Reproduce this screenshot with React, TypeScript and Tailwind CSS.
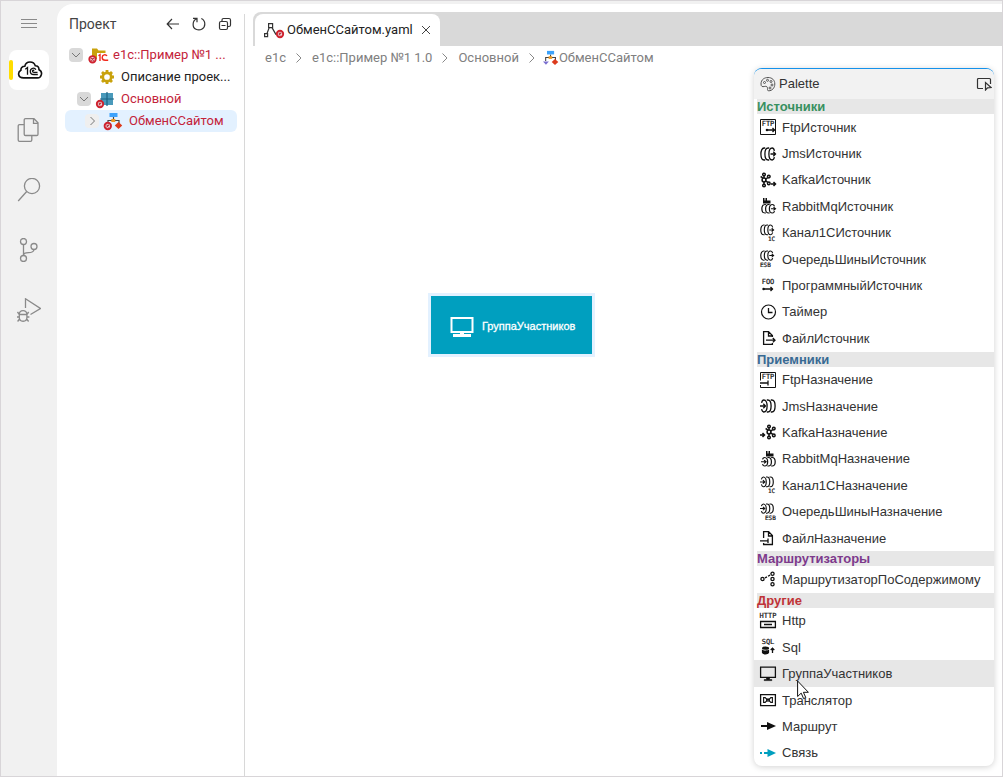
import React from 'react';

interface IconProps {
  className?: string;
}

interface PaletteItem {
  label: string;
  icon: React.ReactNode;
  active?: boolean;
}

interface PaletteSection {
  title: string;
  color: string;
  items: PaletteItem[];
}

/* ---------- shared drawing helpers ---------- */

const Icon16 = ({ children }: { children: React.ReactNode }) => (
  <svg
    viewBox="0 0 16 16"
    className="w-4 h-4 shrink-0 overflow-visible"
    fill="none"
    stroke="#111"
    strokeWidth="1.3"
    aria-hidden="true"
  >
    {children}
  </svg>
);

const Tiny = ({ x, y, size = 7, children }: { x: number; y: number; size?: number; children: string }) => (
  <text
    x={x}
    y={y}
    fontSize={size}
    fontFamily="DejaVu Sans Mono, monospace"
    fill="#111"
    stroke="#111"
    strokeWidth=".2"
  >
    {children}
  </text>
);

const ErrorBadge = ({ cx, cy }: { cx: number; cy: number }) => (
  <g fill="none">
    <circle cx={cx} cy={cy} r="3.2" fill="#f4d8dc" stroke="#cf222e" strokeWidth="1.9" />
    <path d={`M${cx - 1.3} ${cy - 1.3}l2.6 2.6m0-2.6l-2.6 2.6`} stroke="#b0303c" strokeWidth="1.1" />
  </g>
);

// Queue barrel with the arrow coming out of it
const BarrelOut = () => (
  <g>
    <path d="M5.2 2H4.2C-.2 2-.2 14 4.2 14h1M9.2 2h-1C3.8 2 3.8 14 8.2 14h1" />
    <path d="M14.4 4.8C13.9 2.8 13.2 2 12.2 2 7.8 2 7.8 14 12.2 14c1 0 1.7-.8 2.2-2.8" />
    <path d="M10.5 8h5M13.3 5.8L15.5 8l-2.2 2.2" />
  </g>
);

// Queue barrel with the arrow going into it
const BarrelIn = () => (
  <g>
    <path d="M10.8 2h1c4.4 0 4.4 12 0 12h-1M6.8 2h1c4.4 0 4.4 12 0 12h-1" />
    <path d="M1.6 4.8C2.1 2.8 2.8 2 3.8 2c4.4 0 4.4 12 0 12-1 0-1.7-.8-2.2-2.8" />
    <path d="M0 8h5.5M3.3 5.8L5.5 8l-2.2 2.2" />
  </g>
);

const Rabbit = ({ x }: { x: number }) => (
  <path d={`M${x} 0h1.5v2.500h1V0H${x + 4}v2.500h3.500V5.500H${x}z`} fill="#111" stroke="none" />
);

const KafkaNodes = () => (
  <g strokeWidth="1.5">
    <circle cx="4" cy="8" r="1.9" />
    <circle cx="4" cy="2.5" r="1.3" />
    <circle cx="4" cy="13.5" r="1.3" />
    <circle cx="8.8" cy="4.6" r="1.3" />
    <circle cx="8.8" cy="11.4" r="1.3" />
    <path d="M.6 4.500L2.800 5.800M4 3.600V6M4 10v2.400M5.600 7l2-1.200M5.600 9l2 1.200" />
  </g>
);

/* ---------- palette icons ---------- */

const FtpSource = () => (
  <Icon16>
    <path d="M.5.5h15v15H.5z" strokeWidth="1" />
    <Tiny x={1.7} y={7}>FTP</Tiny>
    <path d="M6 11h9M12.5 9l2 2-2 2" />
    <circle cx="7" cy="11" r="1.3" fill="#111" stroke="none" />
  </Icon16>
);

const FtpTarget = () => (
  <Icon16>
    <path d="M.5 8.5V.5h15v15H.5V13" strokeWidth="1" />
    <Tiny x={1.7} y={7}>FTP</Tiny>
    <path d="M0 11h7.5M8 8.5v5" />
  </Icon16>
);

const Jms = ({ out }: { out?: boolean }) => <Icon16>{out ? <BarrelOut /> : <BarrelIn />}</Icon16>;

const KafkaSource = () => (
  <Icon16>
    <KafkaNodes />
    <path d="M11 12h4.5M13.5 10l2 2-2 2" strokeWidth="1.5" />
  </Icon16>
);

const KafkaTarget = () => (
  <Icon16>
    <g transform="translate(5 0)">
      <KafkaNodes />
    </g>
    <path d="M0 11h4.5M2.5 9l2 2-2 2" strokeWidth="1.5" />
  </Icon16>
);

const RabbitSource = () => (
  <Icon16>
    <Rabbit x={3} />
    <g transform="translate(1 5) scale(.94 .72)">
      <BarrelOut />
    </g>
  </Icon16>
);

const RabbitTarget = () => (
  <Icon16>
    <Rabbit x={6} />
    <g transform="translate(1 5) scale(.94 .72)">
      <BarrelIn />
    </g>
  </Icon16>
);

const ChannelIcon = ({ out }: { out?: boolean }) => (
  <Icon16>
    <g transform="translate(0 -1.5) scale(.88 .8)">{out ? <BarrelOut /> : <BarrelIn />}</g>
    <Tiny x={8} y={16} size={6}>1С</Tiny>
  </Icon16>
);

const EsbIcon = ({ out }: { out?: boolean }) => (
  <Icon16>
    <g transform="translate(0 -1.5) scale(.88 .76)">{out ? <BarrelOut /> : <BarrelIn />}</g>
    <Tiny x={out ? 0 : 5} y={16} size={6}>ESB</Tiny>
  </Icon16>
);

const CodeSource = () => (
  <Icon16>
    <Tiny x={1.7} y={5.5}>FOO</Tiny>
    <path d="M3 11h10M10.5 9l2 2-2 2" />
    <circle cx="3.6" cy="11" r="1.3" fill="#111" stroke="none" />
  </Icon16>
);

const TimerIcon = () => (
  <Icon16>
    <circle cx="8.5" cy="8" r="7" strokeWidth="1.2" />
    <path d="M8.5 4v4.5h4" />
  </Icon16>
);

const FileSource = () => (
  <Icon16>
    <path d="M12.4 7V5.5L8.5 1.6H3.6v12.8h8.8V13M8.5 2v4h4" />
    <path d="M6 10.2h9M12.8 8l2.2 2.2-2.2 2.2" />
  </Icon16>
);

const FileTarget = () => (
  <Icon16>
    <path d="M3.6 8V1.6h5l3.8 3.9v9H3.6V13M8.5 2v4h4" />
    <path d="M0 10.8h7.5M8 8.5V13" />
  </Icon16>
);

const RouterIcon = () => (
  <Icon16>
    <circle cx="2.5" cy="8" r="1.6" />
    <circle cx="12.5" cy="2.8" r="1.6" />
    <circle cx="12.5" cy="8" r="1.6" />
    <circle cx="12.5" cy="13.2" r="1.6" />
    <path d="M5 6.8l2-1M8 5.2l2-1.1" />
  </Icon16>
);

const HttpIcon = () => (
  <Icon16>
    <Tiny x={-0.5} y={4.5}>HTTP</Tiny>
    <path d="M.6 8.5h14.8v6H.6zM4 11.5h8" />
  </Icon16>
);

const SqlIcon = () => (
  <Icon16>
    <Tiny x={1.7} y={5}>SQL</Tiny>
    <ellipse cx="5.5" cy="9.2" rx="3.6" ry="1.6" fill="#111" stroke="none" />
    <path d="M1.9 10.6c1.6 1.2 5.6 1.2 7.2 0v3.2c-1.2 2.2-6 2.2-7.2 0z" fill="#111" stroke="none" />
    <path d="M12.5 14V9.4M10.7 11l1.8-1.8 1.8 1.8" />
  </Icon16>
);

const MonitorIcon = () => (
  <Icon16>
    <path d="M.6 1.1h14.8v10.3H.6z" />
    <path d="M6.5 12h3v1.6h2.3v1H4.2v-1h2.3z" fill="#111" strokeWidth=".6" />
  </Icon16>
);

const TranslatorIcon = () => (
  <Icon16>
    <path d="M.6 2.6h14.8v11H.6z" />
    <path
      d="M3.6 5.6h1.6l1.4 1.6v1.6l-1.4 1.6H3.6zM12.4 5.6h-1.6L9.4 7.2v1.6l1.4 1.6h1.6zM6.8 6.2l2.4 3.6M9.2 6.2L6.8 9.8"
      strokeWidth="1.1"
    />
  </Icon16>
);

const RouteIcon = () => (
  <Icon16>
    <path d="M1 8h8" strokeWidth="2" />
    <path d="M7 4l9 4-9 4z" fill="#111" stroke="none" />
  </Icon16>
);

const LinkIcon = () => (
  <Icon16>
    <path d="M0 8h2M4 8h5" stroke="#009fbf" strokeWidth="2" />
    <path d="M7.5 4l8.5 4-8.5 4z" fill="#009fbf" stroke="none" />
  </Icon16>
);

const sections: PaletteSection[] = [
  {
    title: 'Источники',
    color: 'text-[#38905f]',
    items: [
      { label: 'FtpИсточник', icon: <FtpSource /> },
      { label: 'JmsИсточник', icon: <Jms out /> },
      { label: 'KafkaИсточник', icon: <KafkaSource /> },
      { label: 'RabbitMqИсточник', icon: <RabbitSource /> },
      { label: 'Канал1СИсточник', icon: <ChannelIcon out /> },
      { label: 'ОчередьШиныИсточник', icon: <EsbIcon out /> },
      { label: 'ПрограммныйИсточник', icon: <CodeSource /> },
      { label: 'Таймер', icon: <TimerIcon /> },
      { label: 'ФайлИсточник', icon: <FileSource /> },
    ],
  },
  {
    title: 'Приемники',
    color: 'text-[#386a94]',
    items: [
      { label: 'FtpНазначение', icon: <FtpTarget /> },
      { label: 'JmsНазначение', icon: <Jms /> },
      { label: 'KafkaНазначение', icon: <KafkaTarget /> },
      { label: 'RabbitMqНазначение', icon: <RabbitTarget /> },
      { label: 'Канал1СНазначение', icon: <ChannelIcon /> },
      { label: 'ОчередьШиныНазначение', icon: <EsbIcon /> },
      { label: 'ФайлНазначение', icon: <FileTarget /> },
    ],
  },
  {
    title: 'Маршрутизаторы',
    color: 'text-[#7d3a8c]',
    items: [{ label: 'МаршрутизаторПоСодержимому', icon: <RouterIcon /> }],
  },
  {
    title: 'Другие',
    color: 'text-[#c03338]',
    items: [
      { label: 'Http', icon: <HttpIcon /> },
      { label: 'Sql', icon: <SqlIcon /> },
      { label: 'ГруппаУчастников', icon: <MonitorIcon />, active: true },
      { label: 'Транслятор', icon: <TranslatorIcon /> },
      { label: 'Маршрут', icon: <RouteIcon /> },
      { label: 'Связь', icon: <LinkIcon /> },
    ],
  },
];

/* ---------- activity bar ---------- */

const ActivityIcon = ({ children }: { children: React.ReactNode }) => (
  <svg viewBox="0 0 24 24" className="w-6 h-6" fill="none" stroke="#8a8a8a" strokeWidth="1.3" aria-hidden="true">
    {children}
  </svg>
);

const activities = [
  {
    label: 'Файлы',
    icon: (
      <ActivityIcon>
        <path d="M8.5.7H17l4 4v11.5a1.3 1.3 0 0 1-1.3 1.3H8.5a1.3 1.3 0 0 1-1.3-1.3V2A1.3 1.3 0 0 1 8.5.7zM16.5.9v4.5H21" />
        <path d="M7 6.7H2.5A1.3 1.3 0 0 0 1.2 8v14a1.3 1.3 0 0 0 1.3 1.3h11a1.3 1.3 0 0 0 1.3-1.3v-4.2" />
      </ActivityIcon>
    ),
  },
  {
    label: 'Поиск',
    icon: (
      <ActivityIcon>
        <circle cx="15" cy="8" r="7.6" />
        <path d="M9.7 13.5L1.2 23" />
      </ActivityIcon>
    ),
  },
  {
    label: 'Система контроля версий',
    icon: (
      <ActivityIcon>
        <circle cx="6.5" cy="3.5" r="3" />
        <circle cx="6.5" cy="20.5" r="3" />
        <circle cx="17" cy="8.5" r="3" />
        <path d="M6.5 6.5v11M17 11.5c-.5 3-2.5 3.2-5.5 3.2-3 0-5 .3-5 2.8" />
      </ActivityIcon>
    ),
  },
  {
    label: 'Отладка',
    icon: (
      <ActivityIcon>
        <path d="M8.5 10V.8L23.4 10.5 13.5 16.5" />
        <path d="M2.3 16.5c0-5.3 7.6-5.3 7.6 0v3c0 5-7.6 5-7.6 0zM2.3 16.5h7.6M2.3 16.5L.5 14M9.9 16.5l1.8-2.5M0 19h2.3M9.9 19h2.5M2.5 21L.6 23.5M9.7 21l1.9 2.5" />
      </ActivityIcon>
    ),
  },
];

const ActivityBar = () => (
  <nav className="w-14 shrink-0 flex flex-col items-center pt-1.5">
    <button aria-label="Меню" className="w-10 h-7 flex items-center justify-center">
      <svg viewBox="0 0 16 10" className="w-4 h-2.5" stroke="#8a8a8a" aria-hidden="true">
        <path d="M0 .5h16M0 4.5h16M0 8.5h16" />
      </svg>
    </button>
    <button aria-label="Проект" className="mt-3 w-10 h-10 rounded-lg bg-white flex items-center overflow-hidden">
      <span className="w-1 h-5 rounded-sm bg-[#ffdd00]" />
      <svg viewBox="0 0 26 20" className="w-[26px] h-5 ml-1" fill="none" stroke="#111" strokeWidth="1.6" aria-hidden="true">
        <path d="M6.5 17.9H20a4.3 4.3 0 0 0 2-8.2C22 7.2 20.3 5.7 18.3 5.7 17.5 3.2 15.5 2 13 2 10.3 2 8.3 3.8 7.8 6.3 5 6.3 3.8 8.2 3.9 10.2.5 12 .6 17.9 6.5 17.9z" />
        <path
          d="M8.3 9.3l2.2-1.8v7.3M18.8 9.7c-1-2.3-5.5-2-5.5 1.5 0 2.3 1.5 3.3 3.5 3.3h4M17.3 10.5c-1-.6-1.8 0-1.8.8s.6 1 1.5 1h3.5"
          strokeWidth="1.3"
        />
      </svg>
    </button>
    <div className="mt-5 flex flex-col gap-5">
      {activities.map((item) => (
        <button key={item.label} aria-label={item.label} className="w-10 h-10 flex items-center justify-center">
          {item.icon}
        </button>
      ))}
    </div>
  </nav>
);

/* ---------- project tree ---------- */

const FlowIcon = ({ error, className = 'w-[18px]' }: { error?: boolean; className?: string }) => (
  <svg viewBox="0 0 18 18" className={`h-[18px] shrink-0 overflow-visible ${className}`} aria-hidden="true">
    <path d="M3 12.5v-4h11v4M8.5 5v3" fill="none" stroke="#444" strokeWidth="1.2" />
    <path d="M4.500 1h8v4h-8z" fill="#3ca2fb" />
    <path d="M6.300 7h4v3h-4z" fill="#f0981e" />
    <path d="M13.500 10l3.700 3.500-3.700 3.500-3.700-3.500z" fill="#dc3a1c" />
    <path d="M0 12.800h6.600L3.300 16.500z" fill="#7a6fd0" />
    {error && <ErrorBadge cx={2.8} cy={14} />}
  </svg>
);

const FolderIcon = () => (
  <svg viewBox="0 0 18 18" className="w-[18px] h-[18px] shrink-0 overflow-visible" aria-hidden="true">
    <path d="M3 2.5h5l1.5 2h7V7H8v6H3z" fill="#c9a20c" />
    <path
      d="M9.5 9.8l1.5-1.1V15M18 10c-1.2-1.9-4.8-1.5-4.8 1.5 0 2 1.3 2.8 3 2.8h3"
      fill="none"
      stroke="#f02a1e"
      strokeWidth="1.4"
    />
    <ErrorBadge cx={3.5} cy={13.3} />
  </svg>
);

const GearIcon = () => (
  <svg viewBox="0 0 18 18" className="w-[18px] h-[18px] shrink-0" fill="none" stroke="#c9a20c" aria-hidden="true">
    <circle cx="10" cy="9" r="4.2" strokeWidth="2.7" />
    <path
      d="M10 2v3M10 13v3M3 9h3M14 9h3M5 4l2.2 2.2M12.8 11.8L15 14M15 4l-2.2 2.2M7.2 11.8L5 14"
      strokeWidth="2.8"
    />
  </svg>
);

const PackageIcon = () => (
  <svg viewBox="0 0 18 18" className="w-[18px] h-[18px] shrink-0 overflow-visible" aria-hidden="true">
    <path d="M4 3h12v12H4z" fill="#4a9abb" />
    <path d="M10 2v14M3 9h14" stroke="#1d6485" strokeWidth="1.2" />
    <ErrorBadge cx={3} cy={14} />
  </svg>
);

interface TreeRow {
  label: string;
  icon: React.ReactNode;
  indent: string;
  chevron?: 'open' | 'closed';
  error?: boolean;
  selected?: boolean;
}

const treeRows: TreeRow[] = [
  { label: 'e1c::Пример №1 ...', icon: <FolderIcon />, indent: 'pl-1', chevron: 'open', error: true },
  { label: 'Описание проек...', icon: <GearIcon />, indent: 'pl-3' },
  { label: 'Основной', icon: <PackageIcon />, indent: 'pl-3', chevron: 'open', error: true },
  { label: 'ОбменССайтом', icon: <FlowIcon error />, indent: 'pl-5', chevron: 'closed', error: true, selected: true },
];

const ProjectPanel = () => (
  <aside className="w-[188px] shrink-0 pt-2.5">
    <div className="h-full border-r border-[#d8d8d8] pr-[7px]">
      <div className="flex items-center h-5 pl-3 pr-1">
        <h2 className="flex-1 text-[14px] text-[#444]">Проект</h2>
        <div className="flex gap-2.5 text-[#333]">
          <button aria-label="Назад">
            <svg viewBox="0 0 16 16" className="w-4 h-4" fill="none" stroke="currentColor" strokeWidth="1.2" aria-hidden="true">
              <path d="M14 8H2.5M7 3L2.2 8 7 13" />
            </svg>
          </button>
          <button aria-label="Обновить">
            <svg viewBox="0 0 16 16" className="w-4 h-4" fill="none" stroke="currentColor" strokeWidth="1.2" aria-hidden="true">
              <path d="M2 2.3h4v4M6 2.500C1 4.500 1 11.500 5 13.300c4.500 2 8.800-1 8.800-5.300 0-2.500-1.300-4.500-3.500-5.500" />
            </svg>
          </button>
          <button aria-label="Свернуть все">
            <svg viewBox="0 0 16 16" className="w-4 h-4" fill="none" stroke="currentColor" strokeWidth="1.2" aria-hidden="true">
              <rect x="2.500" y="5.500" width="8" height="8" rx="1.500" />
              <path d="M4.500 9.500h4M5 5.500V4a1.500 1.500 0 0 1 1.500-1.500H12A1.500 1.500 0 0 1 13.500 4v5A1.500 1.500 0 0 1 12 10.500h-1.500" />
            </svg>
          </button>
        </div>
      </div>
      <ul className="mt-2.5 pl-2">
        {treeRows.map((row) => (
          <li key={row.label}>
            <button
              className={`w-full h-[22px] rounded-md flex items-center text-left text-[13px] ${row.indent} ${
                row.selected ? 'bg-[#e3f1ff]' : ''
              } ${row.error ? 'text-[#c4233a]' : 'text-[#222]'}`}
            >
              <span
                className={`w-3.5 h-3.5 shrink-0 rounded-sm flex items-center justify-center ${
                  row.chevron === 'open' ? 'bg-[#d9d9d9]' : row.chevron === 'closed' ? 'bg-[#efefef]' : ''
                }`}
              >
                {row.chevron && (
                  <svg viewBox="0 0 10 10" className="w-2.5 h-2.5" fill="none" stroke="#777" aria-hidden="true">
                    <path d={row.chevron === 'open' ? 'M1 3l4 4 4-4' : 'M3.5 1l4 4-4 4'} />
                  </svg>
                )}
              </span>
              <span className="mx-1.5">{row.icon}</span>
              <span className="whitespace-nowrap">{row.label}</span>
            </button>
          </li>
        ))}
      </ul>
    </div>
  </aside>
);

/* ---------- editor ---------- */

const EditorTabs = () => (
  <div className="h-[34px] ml-2 flex shrink-0 rounded-tl-lg bg-[#d9d9d9]">
    <div className="ml-0.5 mt-0.5 w-[185px] flex items-center pl-[9px] pr-2 rounded-t-lg bg-white">
      <svg viewBox="0 0 20 18" className="w-5 h-[18px] shrink-0 overflow-visible" fill="none" stroke="#333" strokeWidth="1.2" aria-hidden="true">
        <path d="M4.600 2.600h4v4h-4zM.6 12.600h3v3h-3zM5.200 6.600L3 12.500M8 6.600l4 7" />
        <ErrorBadge cx={16} cy={13} />
      </svg>
      <span className="ml-[3px] flex-1 text-[13px] text-[#222]">ОбменССайтом.yaml</span>
      <button aria-label="Закрыть">
        <svg viewBox="0 0 12 12" className="w-3 h-3" stroke="#444" aria-hidden="true">
          <path d="M2 2l8 8M10 2l-8 8" />
        </svg>
      </button>
    </div>
  </div>
);

const Crumb = () => (
  <svg viewBox="0 0 8 10" className="w-2 h-2.5" fill="none" stroke="#888" aria-hidden="true">
    <path d="M1.5.5L6 5 1.5 9.5" />
  </svg>
);

const Breadcrumbs = () => (
  <div className="h-[22px] shrink-0 pl-5 pt-px flex items-center gap-[9px] text-[13px] text-[#808080]">
    <a href="#e1c">e1c</a>
    <Crumb />
    <a href="#project">e1c::Пример №1 1.0</a>
    <Crumb />
    <a href="#main">Основной</a>
    <Crumb />
    <a href="#flow" className="flex items-center -ml-0.5">
      <FlowIcon className="w-4" />
      ОбменССайтом
    </a>
  </div>
);

const Palette = () => (
  <section className="w-60 flex flex-col bg-white border-t border-[#1491ea] rounded-lg shadow-[0_1px_6px_rgba(0,0,0,0.18)] overflow-hidden font-['Liberation_Sans',Arial,sans-serif] text-[#333]">
    <header className="h-[30px] shrink-0 flex items-center gap-[3px] px-1.5 bg-[#f2f2f2] text-[13px]">
      <svg viewBox="0 0 16 16" className="w-4 h-4" fill="none" stroke="#555" aria-hidden="true">
        <path d="M1 8C1 3.500 4.500 1.500 8 1.500c4 0 6.800 2.500 6.800 6.500s-2.800 6.800-6 6.800c-2 0-1-2-1.300-3C7 10 5.500 10.200 4.200 10.500 2.500 11 1 10.500 1 8z" />
        <circle cx="4.5" cy="6.5" r="1" />
        <circle cx="7.5" cy="4.3" r="1" />
        <circle cx="11" cy="5.5" r="1" />
        <circle cx="12" cy="9" r="1" />
        <circle cx="10" cy="12" r="1" />
      </svg>
      <h2 className="flex-1">Palette</h2>
      <button aria-label="Выделение" className="-mr-1">
        <svg viewBox="0 0 16 14" className="w-4 h-3.5" fill="none" stroke="#333" strokeWidth="1.2" aria-hidden="true">
          <path d="M7 11.500H2.500A1 1 0 0 1 1.500 10.500V2.500a1 1 0 0 1 1-1H13.500a1 1 0 0 1 1 1V7" />
          <path d="M9.500 5.500v7.500l2-2.200 3.500-.3z" />
        </svg>
      </button>
    </header>
    {sections.map((section) => (
      <React.Fragment key={section.title}>
        <h3 className={`h-[15px] shrink-0 ml-[3px] bg-[#e7e7e7] text-[13px] leading-[15px] font-bold ${section.color}`}>
          {section.title}
        </h3>
        {section.items.map((item) => (
          <button
            key={item.label}
            className={`flex-1 flex items-center gap-1.5 pl-1.5 text-left text-[13px] leading-[15px] ${item.active ? 'bg-[#e7e7e7]' : ''}`}
          >
            {item.icon}
            {item.label}
          </button>
        ))}
      </React.Fragment>
    ))}
  </section>
);

const Cursor = ({ className = '' }: IconProps) => (
  <svg viewBox="0 0 12 20" className={`w-3 h-5 ${className}`} fill="#fff" stroke="#111" aria-hidden="true">
    <path d="M.6 1v15.500l3.600-3.400 2.400 5.500 2.200-1-2.400-5.300h5z" />
  </svg>
);

const Canvas = () => (
  <div className="relative flex-1 min-h-0 flex justify-end pr-2 pb-2.5">
    {/* participant group node placed on the diagram */}
    <div className="absolute left-[183px] top-[225px] w-[167px] h-16 flex items-center gap-2 pl-[19px] pt-[3px] bg-[#009fbf] border-[3px] border-[#e3f1ff] text-white">
      <svg viewBox="0 0 24 22" className="w-6 h-[22px]" fill="none" stroke="#fff" strokeWidth="2" aria-hidden="true">
        <path d="M1.5 2h21v14h-21z" />
        <path d="M10 16h4v2h7v3H3v-3h7z" fill="#fff" stroke="none" />
      </svg>
      <span className="font-['Liberation_Sans',Arial,sans-serif] text-[11px] [-webkit-text-stroke:0.3px_white]">
        ГруппаУчастников
      </span>
    </div>
    <Palette />
    <Cursor className="absolute right-[193px] bottom-[76px]" />
  </div>
);

export default function App() {
  return (
    <div className="h-screen flex pt-[3px] border border-[#d8d5d8] bg-[#f1f1f1] font-['Roboto',sans-serif]">
      <ActivityBar />
      <main className="flex-1 min-w-0 flex bg-white rounded-tl-[16px]">
        <ProjectPanel />
        <div className="flex-1 min-w-0 flex flex-col pt-2">
          <EditorTabs />
          <Breadcrumbs />
          <Canvas />
        </div>
      </main>
    </div>
  );
}
